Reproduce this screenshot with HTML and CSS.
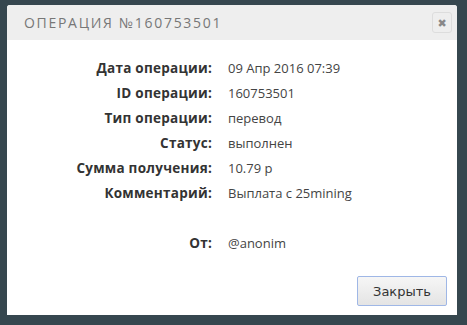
FILE: index.html
```html
<!DOCTYPE html>
<html lang="ru">
<head>
    <meta charset="UTF-8">
    <title>Операция №160753501</title>
    <link rel="stylesheet" href="styles.css">
</head>
<body>
<div class="dialog">
    <div class="dialog-head">
        <span class="dialog-title">Операция №160753501</span>
        <a href="#" class="dialog-close">&#10006;</a>
    </div>
    <div class="dialog-body">
        <dl class="info">
            <dt>Дата операции:</dt><dd>09 Апр 2016 07:39</dd>
            <dt>ID операции:</dt><dd>160753501</dd>
            <dt>Тип операции:</dt><dd>перевод</dd>
            <dt>Статус:</dt><dd>выполнен</dd>
            <dt>Сумма получения:</dt><dd>10.79 р</dd>
            <dt>Комментарий:</dt><dd>Выплата с 25mining</dd>
            <dt></dt><dd></dd>
            <dt>От:</dt><dd>@anonim</dd>
        </dl>
    </div>
    <div class="dialog-foot">
        <button class="btn">Закрыть</button>
    </div>
</div>
</body>
</html>
```

FILE: styles.css
```css
body{margin: 0; background: #36474f; font-family: "Open Sans", "DejaVu Sans", sans-serif}
a{text-decoration: none}

.dialog{margin: 5px 0 0 7px; width: 450px; height: 310px; background: #fff; border-radius: 3px 3px 0 0; display: flex; flex-direction: column}
.dialog-head{height: 35px; background: #eee; border-radius: 3px 3px 0 0; display: flex; align-items: center; justify-content: space-between; padding: 0 5px 0 17px}
.dialog-title{text-transform: uppercase; color: #777; font-size: 14px; letter-spacing: 1.7px}
.dialog-close{width: 18px; height: 19px; border: 1px solid #ddd; border-radius: 3px; background: #eee; color: #888; font-size: 11px; font-weight: bold; display: flex; align-items: center; justify-content: center}

.dialog-body{flex: 1; padding-top: 16px}
.info{display: grid; grid-template-columns: 205px 1fr; column-gap: 16px; grid-auto-rows: 25px; margin: 0; font-size: 13px; line-height: 25px}
.info dt{text-align: right; font-weight: bold; color: #333; font-size: 13.5px; letter-spacing: 0.25px}
.info dd{margin: 0; color: #444}

.dialog-foot{display: flex; justify-content: flex-end; padding: 0 10px 9px 0}
.btn{width: 90px; height: 30px; border: 1px solid #9fb7e6; border-radius: 2px; background: linear-gradient(#f6f6f6, #e4e4e4); color: #333; font-family: "DejaVu Sans", sans-serif; font-size: 13px; padding: 0}
```
